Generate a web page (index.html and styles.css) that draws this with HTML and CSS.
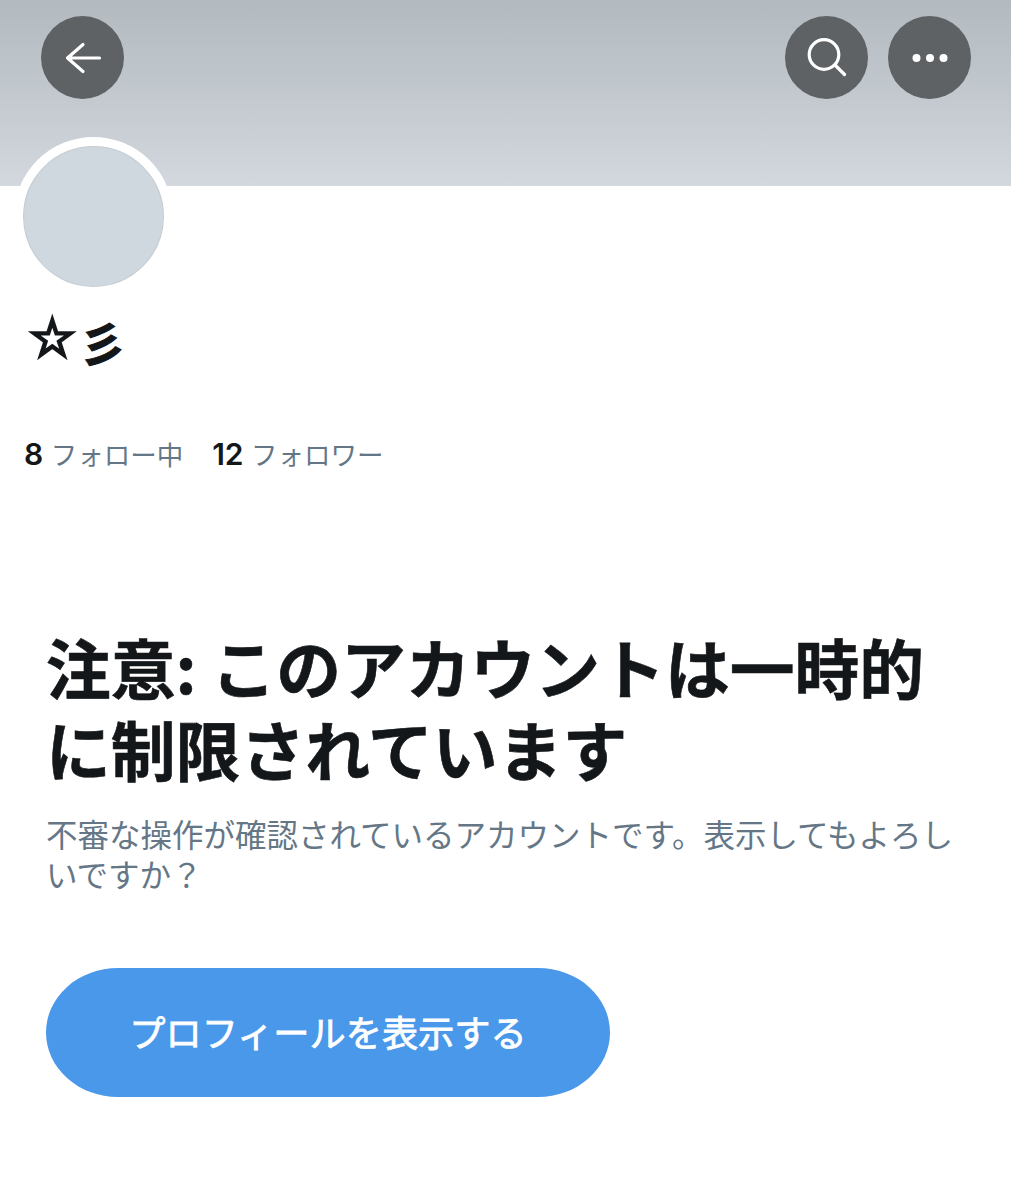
FILE: index.html
```html
<!DOCTYPE html>
<html lang="ja">

<head>
    <meta charset="UTF-8">
    <meta name="viewport" content="width=device-width, initial-scale=1.0">
    <title>プロフィール</title>
    <link rel="stylesheet" href="styles.css">
</head>

<body>
    <div class="banner">
        <a class="round-btn" href="javascript:;">
            <svg width="40" height="32" viewBox="0 0 40 32">
                <path d="M36.500 16H4.500M20 2.500 4.500 16 20 29.500" fill="none" stroke="#fff" stroke-width="3.200" stroke-linecap="round" stroke-linejoin="round" />
            </svg>
        </a>
        <div class="banner-right">
            <a class="round-btn" href="javascript:;">
                <svg width="40" height="40" viewBox="0 0 40 40">
                    <circle cx="17" cy="16.500" r="14.800" fill="none" stroke="#fff" stroke-width="3.200" />
                    <path d="M28 27 37.500 36.500" fill="none" stroke="#fff" stroke-width="3.200" stroke-linecap="round" />
                </svg>
            </a>
            <a class="round-btn" href="javascript:;">
                <svg width="36" height="10" viewBox="0 0 36 10">
                    <circle cx="4.500" cy="5" r="4" fill="#fff" />
                    <circle cx="18" cy="5" r="4" fill="#fff" />
                    <circle cx="31.500" cy="5" r="4" fill="#fff" />
                </svg>
            </a>
        </div>
    </div>

    <div class="profile">
        <div class="avatar"></div>
        <h2 class="name"><span class="star">☆</span>彡</h2>
        <div class="stats">
            <span><b>8</b> フォロー中</span>
            <span><b>12</b> フォロワー</span>
        </div>
    </div>

    <div class="notice">
        <h1>注意: このアカウントは一時的に制限されています</h1>
        <p>不審な操作が確認されているアカウントです。表示してもよろしいですか？</p>
        <a class="show-btn" href="javascript:;">プロフィールを表示する</a>
    </div>
</body>

</html>
```

FILE: styles.css
```css
* {
    margin: 0;
    padding: 0;
    box-sizing: border-box;
}

body {
    background-color: white;
    font-family: "Inter", "Noto Sans CJK JP", sans-serif;
    color: #14171a;
}

.banner {
    height: 186px;
    padding: 16px 40px 0 41px;
    display: flex;
    justify-content: space-between;
    align-items: flex-start;
    background: linear-gradient(#b2b9bf, #d2d8dd);
}

.banner-right {
    display: flex;
    gap: 20px;
}

.round-btn {
    width: 83px;
    height: 83px;
    border-radius: 50%;
    background-color: #5e6265;
    display: flex;
    align-items: center;
    justify-content: center;
}

.profile {
    padding-left: 24px;
}

.avatar {
    position: relative;
    width: 159px;
    height: 159px;
    margin-top: -49px;
    margin-left: -10px;
    border: 9px solid white;
    border-radius: 50%;
    background-color: #cfd8df;
    box-shadow: inset 0 0 0 1px #c6ccd1;
}

.name {
    margin-top: 16px;
    padding-left: 5px;
    font-size: 46px;
    line-height: 58px;
    font-weight: 700;
    font-family: "Noto Sans CJK JP", sans-serif;
    display: flex;
    align-items: center;
    gap: 4px;
    -webkit-text-stroke: 1px #14171a;
}

.star {
    padding-bottom: 5px;
    font-family: "DejaVu Sans", sans-serif;
    font-size: 52px;
    font-weight: 400;
    line-height: 53px;
    -webkit-text-stroke: 3px #14171a;
}

.stats {
    margin-top: 66px;
    display: flex;
    gap: 29px;
    font-size: 26.500px;
    line-height: 36px;
    color: #657786;
}

.stats b {
    font-size: 30px;
    font-weight: 600;
    color: #14171a;
}

.notice {
    padding: 0 38px 0 46px;
    margin-top: 152px;
}

.notice h1 {
    font-family: "Noto Sans CJK JP", sans-serif;
    font-size: 64.800px;
    line-height: 82px;
    font-weight: 700;
    -webkit-text-stroke: 0.600px #14171a;
}

.notice p {
    margin-top: 27px;
    font-size: 31.500px;
    line-height: 40px;
    color: #657786;
}

.show-btn {
    display: flex;
    align-items: center;
    justify-content: center;
    width: 564px;
    height: 129px;
    margin-top: 72px;
    padding-bottom: 4px;
    border-radius: 72px / 64.500px;
    background-color: #4a98ea;
    color: white;
    font-family: "Noto Sans CJK JP", sans-serif;
    font-size: 36.200px;
    font-weight: 400;
    -webkit-text-stroke: 0.800px white;
    text-decoration: none;
}
```
